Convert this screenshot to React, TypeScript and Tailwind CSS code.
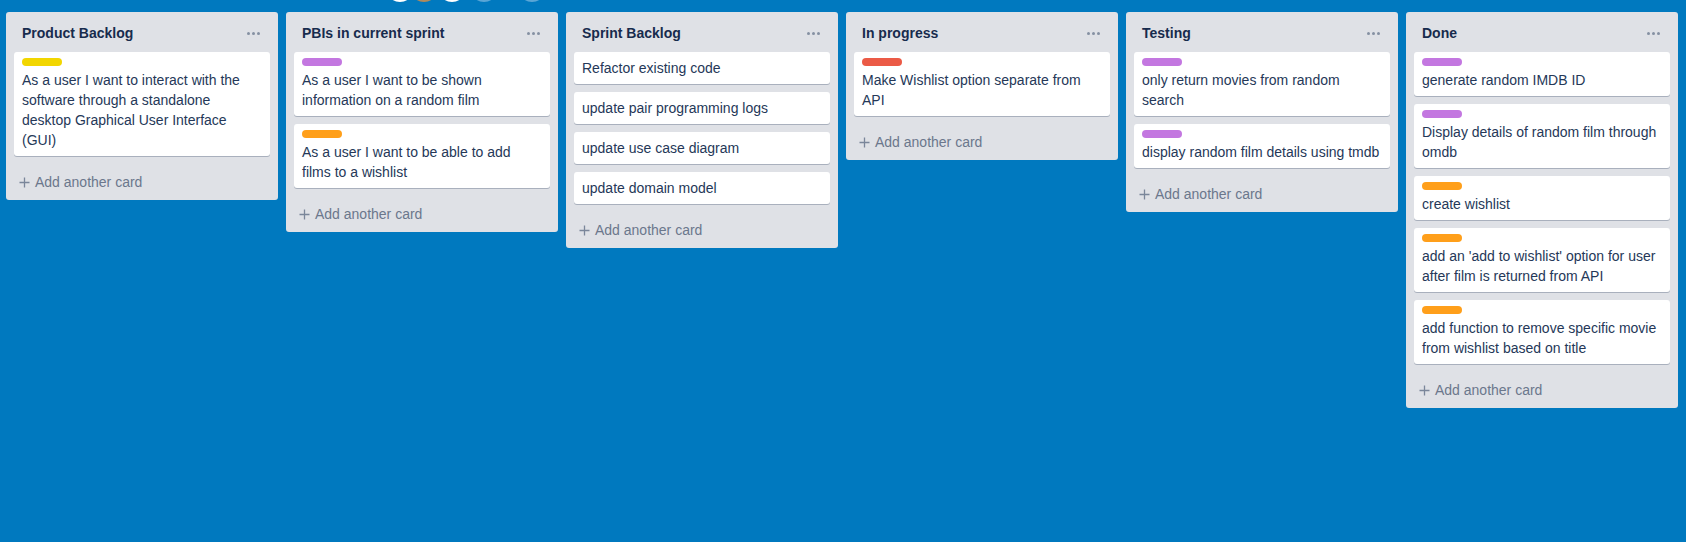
import React from "react";

type Label = "yellow" | "purple" | "orange" | "red";
type Card = { text: string; label?: Label };
type List = { title: string; cards: Card[] };

const labelClass: Record<Label, string> = {
  yellow: "bg-[#f2d600]",
  purple: "bg-[#c377e0]",
  orange: "bg-[#ff9f1a]",
  red: "bg-[#eb5a46]",
};

const lists: List[] = [
  {
    title: "Product Backlog",
    cards: [
      {
        label: "yellow",
        text: "As a user I want to interact with the software through a standalone desktop Graphical User Interface (GUI)",
      },
    ],
  },
  {
    title: "PBIs in current sprint",
    cards: [
      { label: "purple", text: "As a user I want to be shown information on a random film" },
      { label: "orange", text: "As a user I want to be able to add films to a wishlist" },
    ],
  },
  {
    title: "Sprint Backlog",
    cards: [
      { text: "Refactor existing code" },
      { text: "update pair programming logs" },
      { text: "update use case diagram" },
      { text: "update domain model" },
    ],
  },
  {
    title: "In progress",
    cards: [{ label: "red", text: "Make Wishlist option separate from API" }],
  },
  {
    title: "Testing",
    cards: [
      { label: "purple", text: "only return movies from random search" },
      { label: "purple", text: "display random film details using tmdb" },
    ],
  },
  {
    title: "Done",
    cards: [
      { label: "purple", text: "generate random IMDB ID" },
      { label: "purple", text: "Display details of random film through omdb" },
      { label: "orange", text: "create wishlist" },
      { label: "orange", text: "add an 'add to wishlist' option for user after film is returned from API" },
      { label: "orange", text: "add function to remove specific movie from wishlist based on title" },
    ],
  },
];

function Dots() {
  return (
    <div className="flex items-center gap-[2px] pr-[2px]">
      <span className="h-[3px] w-[3px] rounded-full bg-[#8590a2]" />
      <span className="h-[3px] w-[3px] rounded-full bg-[#8590a2]" />
      <span className="h-[3px] w-[3px] rounded-full bg-[#8590a2]" />
    </div>
  );
}

function ListColumn({ list }: { list: List }) {
  return (
    <div className="w-[272px] shrink-0 rounded-[3px] bg-[#dfe1e6]">
      <div className="flex h-10 items-center justify-between pl-4 pr-4 pt-0.5">
        <h2 className="text-[14px] font-bold leading-5 text-[#172b4d]">{list.title}</h2>
        <Dots />
      </div>
      <div className="px-2">
        {list.cards.map((card, i) => (
          <div
            key={i}
            className="mb-2 rounded-[3px] bg-white px-2 pt-[6px] pb-[6px] shadow-[0_1px_0_rgba(9,30,66,0.25)]"
          >
            {card.label && <div className={`mb-1 h-2 w-10 rounded-[4px] ${labelClass[card.label]}`} />}
            <p className="text-[14px] leading-5 text-[#253858]">{card.text}</p>
          </div>
        ))}
      </div>
      <div className="mx-2 flex h-9 items-center gap-[5px] pl-[5px] text-[14px] text-[#6b778c]">
        <svg width="11" height="11" viewBox="0 0 11 11" className="shrink-0">
          <path d="M5.5 0.5v10M0.5 5.5h10" stroke="#7a869a" strokeWidth="1.3" />
        </svg>
        <span className="leading-5">Add another card</span>
      </div>
    </div>
  );
}

export default function App() {
  return (
    <div
      className="relative h-[542px] w-[1686px] overflow-hidden bg-[#0079bf]"
      style={{ fontFamily: '"Liberation Sans", Arial, sans-serif' }}
    >
      {/* board members strip, cut off by the top edge */}
      <div className="absolute left-[386px] top-[-26px] flex items-center gap-[4px]">
        <span className="h-7 w-7 rounded-full bg-white" />
        <span className="-ml-2 h-7 w-7 rounded-full bg-[#b08a5c]" />
        <span className="-ml-1 h-7 w-7 rounded-full bg-white" />
        <span className="h-7 w-7 rounded-full bg-[#5aa6d6]" />
        <span className="ml-4 h-7 w-7 rounded-full bg-[#5aa6d6]" />
      </div>
      <div className="flex items-start gap-2 px-[6px] pt-3">
        {lists.map((list) => (
          <ListColumn key={list.title} list={list} />
        ))}
      </div>
    </div>
  );
}
